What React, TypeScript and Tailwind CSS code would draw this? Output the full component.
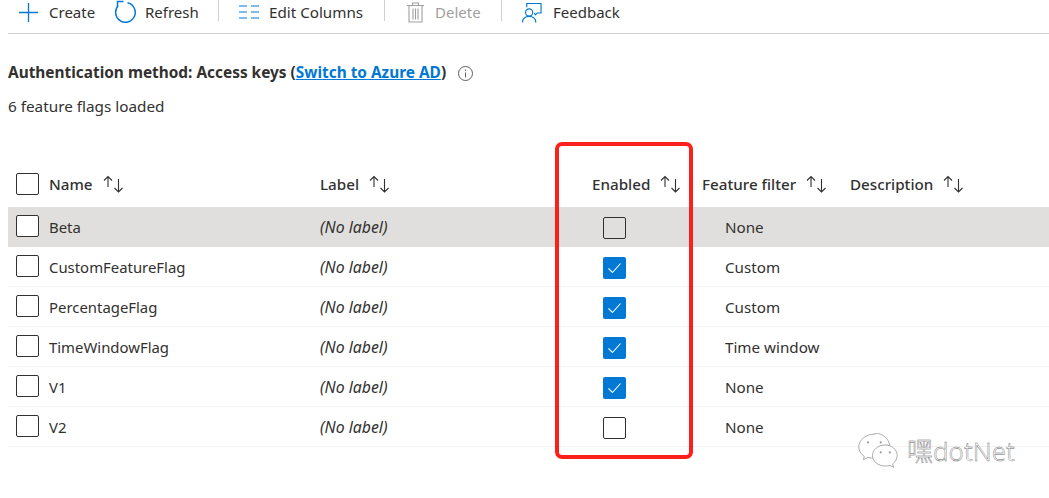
function SortIcon() {
  return (
    <svg width="21" height="18" viewBox="0 0 21 18" fill="none" stroke="#323130" strokeWidth="1.1" className="shrink-0">
      <path d="M5 12V1.500M1 5.500l4-4 4 4" />
      <path d="M15.500 4v13M11.500 13l4 4 4-4" />
    </svg>
  );
}
function Box({ checked = false, clear = false }: { checked?: boolean; clear?: boolean }) {
  if (checked)
    return (
      <div className="w-[23px] h-[22px] rounded-[2px] bg-[#0078d4] flex items-center justify-center">
        <svg width="15" height="12" viewBox="0 0 15 12" fill="none" stroke="#fff" strokeWidth="1.1">
          <path d="M1.500 6.500l4 4 8-9" />
        </svg>
      </div>
    );
  return <div className={"w-[23px] h-[22px] rounded-[2px] border border-[#323130] " + (clear ? "bg-transparent" : "bg-white")} />;
}
function Sep() {
  return <div className="w-px h-[21px] bg-[#d2d0ce] self-start" />;
}
const rows = [
  { n: "Beta", e: false, f: "None" },
  { n: "CustomFeatureFlag", e: true, f: "Custom" },
  { n: "PercentageFlag", e: true, f: "Custom" },
  { n: "TimeWindowFlag", e: true, f: "Time window" },
  { n: "V1", e: true, f: "None" },
  { n: "V2", e: false, f: "None" },
];
const grid = "grid grid-cols-[41px_271px_272px_110px_148px_1fr]";
export default function App() {
  return (
    <div className="relative w-[1049px] h-[498px] overflow-hidden bg-white text-[15px] text-[#323130] font-['Noto_Sans','Open_Sans',sans-serif]">
      <div className="ml-2 h-[34px] border-b border-[#d2d0ce] flex items-start text-[15px] leading-[24px]">
        <div className="flex items-center h-[24px] ml-[11px] w-[87px]">
          <svg width="19" height="19" viewBox="0 0 19 19" stroke="#0078d4" strokeWidth="1.3" className="shrink-0"><path d="M9.500 0v19M0 9.500h19" /></svg>
          <span className="ml-[11px]">Create</span>
        </div>
        <div className="flex items-center h-[24px] ml-[9px] w-[103px]">
          <svg width="22" height="24" viewBox="0 0 22 24" fill="none" stroke="#0078d4" strokeWidth="1.5" className="shrink-0">
            <path d="M12.500 2.800A9.800 9.800 0 1 1 3 6" />
            <path d="M2.500 7V1.500H8.500" />
          </svg>
          <span className="ml-[8px]">Refresh</span>
        </div>
        <Sep />
        <div className="flex items-center h-[24px] ml-[20px] w-[145px]">
          <svg width="20" height="14" viewBox="0 0 20 14" stroke="#0078d4" strokeWidth="1.2" className="shrink-0"><path d="M0 1h8M0 7h8M0 13h8M12 1h8M12 7h8M12 13h8" /></svg>
          <span className="ml-[10px] text-[15.200px]">Edit Columns</span>
        </div>
        <Sep />
        <div className="flex items-center h-[24px] ml-[22px] w-[94px] text-[#a19f9d]">
          <svg width="17" height="21" viewBox="0 0 17 21" fill="none" stroke="#a19f9d" strokeWidth="1.1" className="shrink-0">
            <path d="M0 3.500h17M5.500 3.500V1h6v2.500M2 3.500V20h13V3.500M6 6.500v11M8.500 6.500v11M11 6.500v11" />
          </svg>
          <span className="ml-[11px]">Delete</span>
        </div>
        <Sep />
        <div className="flex items-center h-[24px] ml-[20px]">
          <svg width="20" height="21" viewBox="0 0 21 21" fill="none" stroke="#0078d4" strokeWidth="1.2" className="shrink-0">
            <path d="M5 5V1h15v10h-4l-2 2-1-2" />
            <circle cx="7.500" cy="10.500" r="3.800" />
            <path d="M0.500 21c0-4 3-6.500 7-6.500s7 2.500 7 6.500" />
          </svg>
          <span className="ml-[11px]">Feedback</span>
        </div>
      </div>

      <div className="ml-2 mt-[28px] flex items-center h-[22px] text-[15.400px] font-bold">
        <span>Authentication method: Access keys (</span>
        <span className="text-[#0078d4] underline">Switch to Azure AD</span>
        <span>)</span>
        <svg width="15" height="15" viewBox="0 0 15 15" fill="none" stroke="#605e5c" strokeWidth="1" className="ml-[12px]">
          <circle cx="7.500" cy="7.500" r="7" />
          <path d="M7.500 6.500v5M7.500 3.500v1.500" />
        </svg>
      </div>
      <div className="ml-2 mt-[11px] h-[22px] leading-[22px] text-[15.300px]">6 feature flags loaded</div>

      <div className={grid + " ml-2 mt-[48px] mb-[4px] h-[38px] items-center font-medium text-[15.200px]"}>
        <div className="pl-2"><Box /></div>
        <div className="flex items-center gap-[10px]"><span>Name</span><SortIcon /></div>
        <div className="flex items-center gap-[10px]"><span>Label</span><SortIcon /></div>
        <div className="flex items-center gap-[10px]"><span>Enabled</span><SortIcon /></div>
        <div className="flex items-center gap-[10px]"><span>Feature filter</span><SortIcon /></div>
        <div className="flex items-center gap-[10px]"><span>Description</span><SortIcon /></div>
      </div>
      {rows.map((r, i) => (
        <div
          key={r.n}
          className={grid + " ml-2 h-[40px] items-center text-[15.200px] border-b " + (i === 0 ? "bg-[#e1dfdd] border-[#e1dfdd]" : "border-[#f3f2f1]")}
        >
          <div className="pl-2 -mt-[1px]"><Box /></div>
          <div className="text-[14.900px] mt-[1px]">{r.n}</div>
          <div className="italic text-[15.800px] mt-[3px]">(No label)</div>
          <div className="pl-[11px] mt-[2px]"><Box checked={r.e} clear /></div>
          <div className="pl-[23px] mt-[1px]">{r.f}</div>
          <div />
        </div>
      ))}

      <div className="absolute left-[555px] top-[142px] w-[138px] h-[317px] border-[4px] border-[#fb2019] rounded-[7px]" />

      <div className="absolute left-[857px] top-[433px] flex items-center">
        <svg width="42" height="35" viewBox="0 0 46 38" fill="#fff" stroke="#9a9a9a" strokeWidth="0.9">
          <path d="M20 1C10 1 2 7 2 15c0 4.500 2.500 8 6 10.500L7 29l5-2.500c2 .6 5 1 7 1h3c-1-1.500-2-4-1-7 2-5 8-8 15-7-1-7-8-13.500-16-13.500z" />
          <path d="M31 13c-8 0-14 5-14 11.500s6 11.500 14 11.500c2 0 3-.3 5-.8l4 2.300-1-3.800c3-2.200 5-5.700 5-9.200C44 18 38 13 31 13z" />
          <circle cx="12" cy="10" r="1.200" fill="#9a9a9a" stroke="none" />
          <circle cx="26" cy="10" r="1.200" fill="#9a9a9a" stroke="none" />
          <circle cx="26" cy="21" r="1.200" fill="#9a9a9a" stroke="none" />
          <circle cx="36" cy="21" r="1.200" fill="#9a9a9a" stroke="none" />
        </svg>
        <span className="ml-[8px] text-[26px] leading-none font-light text-white [-webkit-text-stroke:0.4px_#666666] font-['Noto_Sans','Noto_Sans_CJK_SC',sans-serif]">嘿dotNet</span>
      </div>
    </div>
  );
}
